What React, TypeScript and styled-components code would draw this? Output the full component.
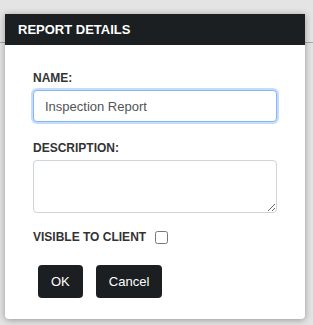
import React from "react";
import styled, { createGlobalStyle } from "styled-components";

const GlobalStyle = createGlobalStyle`
  html, body {
    margin: 0;
    padding: 0;
  }
  body {
    font-family: "Liberation Sans", Arial, sans-serif;
    background-color: #e4e4e4;
    background-image: linear-gradient(#a9a9a9, #a9a9a9);
    background-repeat: no-repeat;
    background-size: 100% 1px;
    background-position: 0 42px;
    min-height: 325px;
  }
`;

const Page = styled.div`
  padding: 14px 0 0 5px;
`;

const Dialog = styled.div`
  width: 300px;
  background: #ffffff;
  border-radius: 0 0 4px 4px;
  box-shadow: 0 1px 7px rgba(0, 0, 0, 0.35);
  overflow: hidden;
`;

const Header = styled.div`
  height: 31px;
  display: flex;
  align-items: center;
  padding-left: 13px;
  background: #1c1f22;
  color: #ffffff;
  font-weight: bold;
  font-size: 13px;
`;

const Body = styled.div`
  padding: 26px 28px 21px 28px;
  display: flex;
  flex-direction: column;
`;

const Field = styled.div<{ $gap?: number }>`
  display: flex;
  flex-direction: column;
  margin-top: ${(p) => p.$gap ?? 0}px;
`;

const Label = styled.label`
  font-size: 12px;
  line-height: 14px;
  font-weight: bold;
  color: #333;
  margin-bottom: 5px;
`;

const TextInput = styled.input`
  box-sizing: border-box;
  height: 32px;
  width: 244px;
  padding: 0 11px;
  font-family: "Liberation Sans", Arial, sans-serif;
  font-size: 13px;
  color: #505559;
  border: 1px solid #86b7f4;
  border-radius: 4px;
  box-shadow: 0 0 0 2px #c4ddfb;
  outline: none;
`;

const TextArea = styled.textarea`
  box-sizing: border-box;
  height: 53px;
  width: 244px;
  padding: 6px 11px;
  font-family: "Liberation Sans", Arial, sans-serif;
  font-size: 13px;
  border: 1px solid #ced4da;
  border-radius: 4px;
  resize: vertical;
  display: block;
`;

const CheckRow = styled.div`
  display: flex;
  align-items: center;
  margin-top: 17px;
  height: 14px;
`;

const CheckLabel = styled.label`
  font-size: 12px;
  line-height: 14px;
  font-weight: bold;
  color: #333;
`;

const Check = styled.input`
  width: 13px;
  height: 13px;
  margin: 1px 0 0 9px;
`;

const Buttons = styled.div`
  display: flex;
  gap: 13px;
  margin: 21px 0 0 5px;
`;

const Button = styled.button`
  height: 33px;
  padding: 0 13px;
  border: none;
  border-radius: 4px;
  background: #1c1f22;
  color: #ffffff;
  font-family: "Liberation Sans", Arial, sans-serif;
  font-size: 13px;
  cursor: pointer;
`;

export default function App() {
  return (
    <>
      <GlobalStyle />
      <Page>
        <Dialog>
          <Header>REPORT DETAILS</Header>
          <Body>
            <Field>
              <Label>NAME:</Label>
              <TextInput type="text" defaultValue="Inspection Report" />
            </Field>
            <Field $gap={19}>
              <Label>DESCRIPTION:</Label>
              <TextArea />
            </Field>
            <CheckRow>
              <CheckLabel>VISIBLE TO CLIENT</CheckLabel>
              <Check type="checkbox" />
            </CheckRow>
            <Buttons>
              <Button>OK</Button>
              <Button>Cancel</Button>
            </Buttons>
          </Body>
        </Dialog>
      </Page>
    </>
  );
}
